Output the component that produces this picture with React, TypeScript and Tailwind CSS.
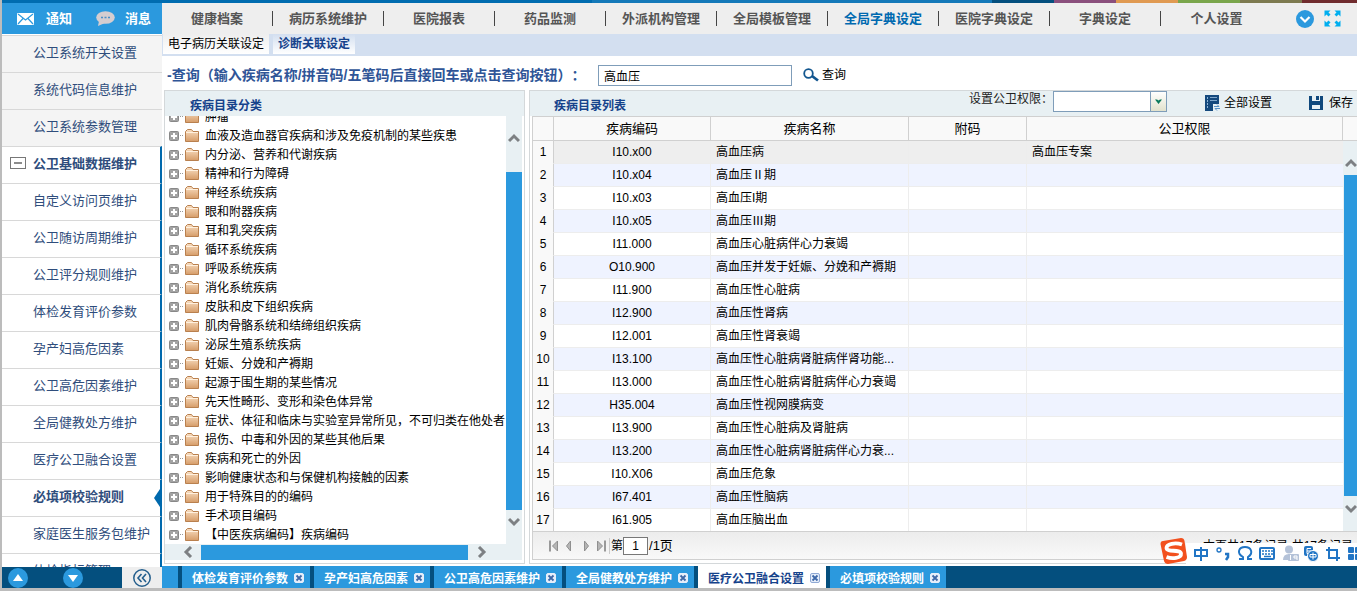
import clsx from "clsx";
import type { ReactNode } from "react";

const topNav = [
  "健康档案",
  "病历系统维护",
  "医院报表",
  "药品监测",
  "外派机构管理",
  "全局模板管理",
  "全局字典设定",
  "医院字典设定",
  "字典设定",
  "个人设置",
];

const sideGroups = ["公卫系统开关设置", "系统代码信息维护", "公卫系统参数管理"];

const sideItems = [
  "自定义访问页维护",
  "公卫随访周期维护",
  "公卫评分规则维护",
  "体检发育评价参数",
  "孕产妇高危因素",
  "公卫高危因素维护",
  "全局健教处方维护",
  "医疗公卫融合设置",
  "必填项校验规则",
  "家庭医生服务包维护",
  "体检指标管理",
];

const categories = [
  "肿瘤",
  "血液及造血器官疾病和涉及免疫机制的某些疾患",
  "内分泌、营养和代谢疾病",
  "精神和行为障碍",
  "神经系统疾病",
  "眼和附器疾病",
  "耳和乳突疾病",
  "循环系统疾病",
  "呼吸系统疾病",
  "消化系统疾病",
  "皮肤和皮下组织疾病",
  "肌肉骨骼系统和结缔组织疾病",
  "泌尿生殖系统疾病",
  "妊娠、分娩和产褥期",
  "起源于围生期的某些情况",
  "先天性畸形、变形和染色体异常",
  "症状、体征和临床与实验室异常所见，不可归类在他处者",
  "损伤、中毒和外因的某些其他后果",
  "疾病和死亡的外因",
  "影响健康状态和与保健机构接触的因素",
  "用于特殊目的的编码",
  "手术项目编码",
  "【中医疾病编码】疾病编码",
];

const diseases = [
  { code: "I10.x00", name: "高血压病", right: "高血压专案" },
  { code: "I10.x04", name: "高血压Ⅱ期" },
  { code: "I10.x03", name: "高血压I期" },
  { code: "I10.x05", name: "高血压Ⅲ期" },
  { code: "I11.000", name: "高血压心脏病伴心力衰竭" },
  { code: "O10.900", name: "高血压并发于妊娠、分娩和产褥期" },
  { code: "I11.900", name: "高血压性心脏病" },
  { code: "I12.900", name: "高血压性肾病" },
  { code: "I12.001", name: "高血压性肾衰竭" },
  { code: "I13.100", name: "高血压性心脏病肾脏病伴肾功能..." },
  { code: "I13.000", name: "高血压性心脏病肾脏病伴心力衰竭" },
  { code: "H35.004", name: "高血压性视网膜病变" },
  { code: "I13.900", name: "高血压性心脏病及肾脏病" },
  { code: "I13.200", name: "高血压性心脏病肾脏病伴心力衰..." },
  { code: "I10.X06", name: "高血压危象" },
  { code: "I67.401", name: "高血压性脑病" },
  { code: "I61.905", name: "高血压脑出血" },
];

const openTabs = [
  "体检发育评价参数",
  "孕产妇高危因素",
  "公卫高危因素维护",
  "全局健教处方维护",
  "医疗公卫融合设置",
  "必填项校验规则",
];

function Chevron({ d }: { d: string }) {
  return (
    <svg width="12" height="12" viewBox="0 0 12 12" className="shrink-0">
      <path d={d} fill="none" stroke="#7d8083" strokeWidth="3" />
    </svg>
  );
}

const UP = "M1 9 L6 4 L11 9";
const DOWN = "M1 3 L6 8 L11 3";
const LEFT = "M9 1 L4 6 L9 11";
const RIGHT = "M3 1 L8 6 L3 11";

function ColorStrip() {
  return (
    <div className="flex h-[3px] shrink-0 bg-[#006cb0]">
      <div className="ml-auto w-[400px] bg-[#1479b9]" />
      <div className="w-[62px] bg-[#044f7e]" />
      <div className="w-[62px] bg-[#8a4f7d]" />
      <div className="w-[62px] bg-[#e09a52]" />
      <div className="w-[62px] bg-[#7aa64c]" />
      <div className="w-[62px] bg-[#7d7a50]" />
      <div className="w-[55px] bg-[#702c2e]" />
    </div>
  );
}

function SideItem({ label, className, children }: { label: string; className?: string; children?: ReactNode }) {
  return (
    <li className={clsx("relative h-[37px] shrink-0 border-t border-[#d8d8d8]", className)}>
      {children}
      <a href="#" className="flex h-full items-center pb-[2px] pl-[31px] text-[13px] leading-4 whitespace-nowrap">
        {label}
      </a>
    </li>
  );
}

function Sidebar() {
  return (
    <aside className="flex w-40 shrink-0 flex-col">
      <div className="flex h-[31px] shrink-0 items-center bg-[#2b99de] text-[13px] font-bold text-white">
        <button className="flex items-center gap-3 pl-[15px]">
          <svg width="17" height="12" viewBox="0 0 17 12">
            <rect width="17" height="12" rx="1" fill="#fff" />
            <path d="M1 1 L8.500 7 L16 1 M1 11 L6 5.500 M16 11 L11 5.500" fill="none" stroke="#2b99de" strokeWidth="1.200" />
          </svg>
          通知
        </button>
        <button className="ml-6 flex items-center gap-[10px]">
          <svg width="19" height="15" viewBox="0 0 19 15">
            <ellipse cx="9.500" cy="6.500" rx="9.300" ry="6.300" fill="#d5cdd0" />
            <path d="M3 10 L2 15 L9 12 Z" fill="#d5cdd0" />
            <path d="M5 6.500 h2 M8.500 6.500 h2 M12 6.500 h2" stroke="#4a90c8" strokeWidth="1.300" />
          </svg>
          消息
        </button>
      </div>
      <nav className="min-h-0 flex-1 overflow-hidden bg-white pt-px text-[#2f4d7c]">
        <ul>
          {sideGroups.map((label) => (
            <SideItem key={label} label={label} className="bg-[#f4f4f4]" />
          ))}
          <SideItem label="公卫基础数据维护" className="border-r-2 border-r-[#0069ad] font-bold">
            <svg width="16" height="12" viewBox="0 0 16 12" className="absolute top-[10px] left-2">
              <rect x="0.500" y="0.500" width="15" height="11" fill="#fff" stroke="#777" />
              <path d="M4 6 h8" stroke="#666" strokeWidth="1.500" />
            </svg>
          </SideItem>
          {sideItems.map((label) => (
            <SideItem
              key={label}
              label={label}
              className={clsx("border-r-2 border-r-[#0069ad]", label === "必填项校验规则" && "font-bold")}
            >
              {label === "必填项校验规则" && (
                <svg width="6" height="18" viewBox="0 0 6 18" className="absolute top-[9px] right-0">
                  <path d="M6 0 L0 9 L6 18 Z" fill="#0069ad" />
                </svg>
              )}
            </SideItem>
          ))}
        </ul>
      </nav>
      <div className="flex h-[21px] shrink-0 bg-[#044f7e]">
        <div className="flex flex-1 items-center gap-[35px] pl-[6px]">
          <button aria-label="上移">
            <svg width="20" height="20" viewBox="0 0 20 20">
              <circle cx="10" cy="10" r="10" fill="#2b99de" />
              <path d="M10 6 L15 13 H5 Z" fill="#fff" />
            </svg>
          </button>
          <button aria-label="下移">
            <svg width="20" height="20" viewBox="0 0 20 20">
              <circle cx="10" cy="10" r="10" fill="#2b99de" />
              <path d="M10 14 L15 7 H5 Z" fill="#fff" />
            </svg>
          </button>
        </div>
        <button aria-label="收起" className="flex w-10 items-center justify-center bg-[#eee]">
          <svg width="18" height="18" viewBox="0 0 18 18" fill="none" stroke="#255f8d">
            <circle cx="9" cy="9" r="8.200" strokeWidth="1.500" />
            <path d="M8.500 5 L5 9 L8.500 13 M13 5 L9.500 9 L13 13" strokeWidth="1.600" />
          </svg>
        </button>
      </div>
    </aside>
  );
}

function TopNav() {
  return (
    <nav className="flex h-[31px] shrink-0 items-center bg-[#eee]">
      {topNav.map((label, i) => (
        <a
          key={label}
          href="#"
          className={clsx(
            "h-[15px] w-[111px] shrink-0 text-center text-[13px] leading-[15px] font-bold whitespace-nowrap",
            i < topNav.length - 1 && "border-r border-[#444]",
            label === "全局字典设定" ? "text-[#0069b0]" : "text-[#555]",
          )}
        >
          {label}
        </a>
      ))}
      <div className="ml-auto flex items-center gap-[10px] pr-4">
        <button aria-label="展开">
          <svg width="18" height="18" viewBox="0 0 18 18">
            <circle cx="9" cy="9" r="9" fill="#2b99de" />
            <path d="M4.500 7 L9 11.500 L13.500 7" fill="none" stroke="#fff" strokeWidth="2.200" />
          </svg>
        </button>
        <button aria-label="全屏">
          <svg width="17" height="17" viewBox="0 0 17 17" fill="#00aeef">
            <path d="M0.500 0.500 h6 l-2 2 l2 2 l-2 2 l-2 -2 l-2 2 z" />
            <path d="M16.500 0.500 v6 l-2 -2 l-2 2 l-2 -2 l2 -2 l-2 -2 z" />
            <path d="M0.500 16.500 v-6 l2 2 l2 -2 l2 2 l-2 2 l2 2 z" />
            <path d="M16.500 16.500 h-6 l2 -2 l-2 -2 l2 -2 l2 2 l2 -2 z" />
          </svg>
        </button>
      </div>
    </nav>
  );
}

function FolderIcon() {
  return (
    <svg width="14" height="13" viewBox="0 0 14 13" className="shrink-0">
      <defs>
        <linearGradient id="folder" x1="0" y1="0" x2="0" y2="1">
          <stop offset="0" stopColor="#f9dfc3" />
          <stop offset="1" stopColor="#d69c68" />
        </linearGradient>
      </defs>
      <path d="M0.500 12.500 V2.500 L2.500 0.500 H6.500 L8 2.500 H13.500 V12.500 Z" fill="url(#folder)" stroke="#b9804e" />
      <path d="M1 3.500 H13" stroke="#fff1df" />
    </svg>
  );
}

function CategoryPanel() {
  return (
    <section className="flex w-[361px] shrink-0 flex-col border border-[#d4d8da] bg-white">
      <h2 className="h-[25px] shrink-0 bg-[#e8f0f3] pt-[7px] pl-[25px] text-xs leading-4 font-bold text-[#15428b]">
        疾病目录分类
      </h2>
      <div className="flex min-h-0 flex-1 pr-[2px]">
        <ul className="flex min-w-0 flex-1 flex-col justify-end overflow-hidden pl-1 text-xs">
          {categories.map((name) => (
            <li key={name} className="flex h-[19px] shrink-0 items-center whitespace-nowrap">
              <button aria-label="展开" className="shrink-0">
                <svg width="10" height="10" viewBox="0 0 10 10">
                  <rect x="0.500" y="0.500" width="9" height="9" rx="1" fill="#a3a3a3" stroke="#888" />
                  <path d="M5 2 V8 M2 5 H8" stroke="#fff" strokeWidth="2" />
                </svg>
              </button>
              <span className="mr-[2px] ml-px w-[3px] shrink-0 border-t border-dotted border-[#999]" />
              <FolderIcon />
              <span className="pl-[6px]">{name}</span>
            </li>
          ))}
        </ul>
        <div className="flex w-4 shrink-0 flex-col items-center bg-[#e8f0f3] pt-4 pb-4">
          <Chevron d={UP} />
          <div className="mt-[28px] mb-[6px] w-full flex-1 bg-[#2b99de]" />
          <Chevron d={DOWN} />
        </div>
      </div>
      <div className="mr-[2px] mb-[3px] flex h-4 shrink-0 items-center bg-[#e8f0f3] pr-[34px] pl-[17px]">
        <Chevron d={LEFT} />
        <div className="mr-2 ml-[7px] h-[15px] flex-1 bg-[#2b99de]" />
        <Chevron d={RIGHT} />
      </div>
    </section>
  );
}

function ListToolbar() {
  return (
    <div className="flex h-[25px] shrink-0 items-start bg-[#e8f0f3] text-xs leading-4">
      <h2 className="mt-[7px] ml-6 font-bold text-[#15428b]">疾病目录列表</h2>
      <label htmlFor="permission" className="ml-auto text-[#222]">
        设置公卫权限：
      </label>
      <div className="relative h-[21px] w-[114px]">
        <select id="permission" className="h-full w-full appearance-none border border-[#7f9db9] bg-white" />
        <span className="pointer-events-none absolute inset-y-px right-px flex w-4 items-center justify-center border-l border-[#7f9db9] bg-linear-to-b from-white to-[#e2e2cc]">
          <svg width="7" height="5" viewBox="0 0 7 5">
            <path d="M0 0.500 H2 L3.500 1.500 L5 0.500 H7 L3.500 5 Z" fill="#0b7a5c" />
          </svg>
        </span>
      </div>
      <button className="mt-1 ml-[38px] flex items-center gap-1">
        <svg width="15" height="16" viewBox="0 0 15 16">
          <path d="M0 0 H14 V9 H8 V16 H0 Z" fill="#15497d" />
          <path d="M5 2.500 H12 M5 5.500 H12" stroke="#7fa6ca" />
          <path d="M2.500 2 V14" stroke="#8db4d6" strokeDasharray="2 1" />
          <path d="M9 11.500 H14 L12 9.500 M15 13.500 H10 L12 15.500" fill="none" stroke="#5a93c7" />
        </svg>
        全部设置
      </button>
      <button className="mt-1 mr-1 ml-[37px] flex items-center gap-[6px]">
        <svg width="14" height="14" viewBox="0 0 14 14">
          <path d="M0 0 H14 V14 H0 Z" fill="#0f487c" />
          <path d="M3 0 H11 V5 H3 Z M3 9 H11 V13 H3 Z" fill="#e8f0f3" />
          <path d="M7 0 H10 V4 H7 Z" fill="#0f487c" />
        </svg>
        保存
      </button>
    </div>
  );
}

function DiseaseTable() {
  return (
    <div className="ml-[2px] flex min-h-0 flex-1 overflow-hidden border-l border-[#d0d0d0]">
      <div className="min-w-0 flex-1 overflow-hidden">
        <table className="w-full table-fixed border-separate border-spacing-0 text-xs">
          <colgroup>
            <col className="w-[21px]" />
            <col className="w-[157px]" />
            <col className="w-[198px]" />
            <col className="w-[118px]" />
            <col />
          </colgroup>
          <thead>
            <tr className="h-[25px] bg-[#f9f9f9] text-[13px] leading-4">
              {["", "疾病编码", "疾病名称", "附码", "公卫权限"].map((title, i) => (
                <th key={i} className="border-y border-r border-[#d0d0d0] p-0 font-normal">
                  {title}
                </th>
              ))}
            </tr>
          </thead>
          <tbody>
            {diseases.map((row, i) => (
              <tr
                key={row.code}
                className={clsx("h-[23px]", i === 0 ? "bg-[#eee]" : i % 2 ? "bg-[#eff3ff]" : "bg-white")}
              >
                <td className="border-r border-b border-r-[#d0d0d0] border-b-[#f9f9f9] bg-[#f9f9f9] p-0 text-center">
                  {i + 1}
                </td>
                <td className="border-r border-b border-[#ededed] p-0 text-center">{row.code}</td>
                <td className="truncate border-r border-b border-[#ededed] p-0 pl-[5px]">{row.name}</td>
                <td className="border-r border-b border-[#ededed] p-0" />
                <td className="border-b border-[#ededed] p-0 pl-[5px]">{row.right}</td>
              </tr>
            ))}
          </tbody>
        </table>
      </div>
      <div className="flex w-[14px] shrink-0 flex-col">
        <div className="h-[25px] shrink-0 border-y border-[#d0d0d0] bg-[#f9f9f9]" />
        <div className="flex min-h-0 flex-1 flex-col items-center bg-[#e8f0f3] pt-4 pb-4 pl-px">
          <Chevron d={UP} />
          <div className="mt-[6px] mb-[7px] w-full flex-1 bg-[#2b99de]" />
          <Chevron d={DOWN} />
        </div>
      </div>
    </div>
  );
}

function PagerIcon({ d, label, bar }: { d: string; label: string; bar?: string }) {
  return (
    <button aria-label={label}>
      <svg width="11" height="12" viewBox="0 0 11 12">
        <path d={d} fill="#b5b5b5" stroke="#8f8f8f" />
        {bar && <path d={bar} stroke="#999" strokeWidth="2" />}
      </svg>
    </button>
  );
}

function Pager() {
  return (
    <div className="mb-[3px] ml-[2px] flex h-[29px] shrink-0 items-center border border-r-0 border-[#d0d0d0] bg-linear-to-b from-[#ececec] to-[#f9f9f9] pl-[15px] text-xs leading-4">
      <div className="flex gap-[5px]">
        <PagerIcon label="首页" d="M9.500 1 V11 L4.500 6 Z" bar="M2 0.500 V11.500" />
        <PagerIcon label="上一页" d="M6.500 1 V11 L2.500 6 Z" />
        <PagerIcon label="下一页" d="M4.500 1 V11 L8.500 6 Z" />
        <PagerIcon label="末页" d="M1.500 1 V11 L6.500 6 Z" bar="M9 0.500 V11.500" />
      </div>
      <label htmlFor="page" className="ml-[2px] border-l border-[#ccc] pl-px">
        第
      </label>
      <input
        id="page"
        defaultValue="1"
        className="h-[18px] w-[25px] border border-[#777] bg-white text-center"
      />
      <span className="pl-px text-[13px]">/1页</span>
      <span className="ml-auto pr-1">本页共17条记录,共17条记录</span>
    </div>
  );
}

function ImeBar() {
  return (
    <div className="absolute right-0 bottom-[23px] flex h-[26px] items-end">
      <svg width="28" height="28" viewBox="0 0 28 28" className="relative z-10 -mr-[2px] shrink-0">
        <path d="M3 4 L21 1 Q24 1 24.500 4 L27 20 Q27 23 24 24 L8 27 Q5 27 4 24 L0.500 7 Q0.500 4 3 4 Z" fill="#f2501e" />
        <path
          d="M22 7.500 C15 5 6.500 7 6.500 11 C6.500 15.500 20.500 12 21 16.500 C21.500 21.500 12 22 6.500 20"
          fill="none"
          stroke="#fff"
          strokeWidth="3.800"
        />
      </svg>
      <div className="flex h-[22px] w-[171px] items-start overflow-hidden bg-white text-[#2175c5]">
        <svg width="171" height="22" viewBox="0 0 171 22" fill="none" stroke="#2175c5" strokeWidth="2">
          <path d="M9 7 H21 V13 H9 Z M15 4 V18" />
          <circle cx="33" cy="7" r="2" strokeWidth="1.300" />
          <path d="M39 11 h3 v3 l-2 3" strokeWidth="2.500" />
          <path d="M53 16 H57 V14 C50 10 53 4 59 4 C65 4 68 10 62 14 V16 H66" />
          <rect x="74" y="5" width="14" height="11" rx="1" />
          <path d="M76 8 H87 M76 11 H87" strokeDasharray="2 1" strokeWidth="1.500" />
          <path d="M78 13.500 H85" strokeWidth="1.500" />
          <g fill="#b4c2d8" stroke="none">
            <circle cx="103" cy="6.500" r="4" />
            <path d="M97 17 Q97 11 103 11 Q107 11 109 13 V17 H97 Z" />
            <rect x="102" y="11" width="11" height="7" rx="1" />
          </g>
          <path d="M104.500 12 V17 M111 17 V13 H108 V15 H111" stroke="#fff" strokeWidth="1" />
          <rect x="118" y="3" width="9" height="10" rx="2" fill="#2175c5" stroke="none" />
          <path d="M125 5.500 H121 V10.500 H125 M121 8 H125" stroke="#fff" strokeWidth="1" />
          <circle cx="127" cy="13" r="5.500" fill="#2175c5" stroke="#fff" strokeWidth="1" />
          <path d="M124 11.500 H130 V14 H124 Z M127 9.500 V16.500" stroke="#fff" strokeWidth="1" />
          <path d="M143 4 V15 H154 M140 7 H151 V18" />
          <g fill="#2175c5" stroke="none">
            <rect x="162" y="4" width="6" height="6" rx="1" />
            <rect x="169" y="4" width="6" height="6" rx="1" />
            <rect x="162" y="11" width="6" height="6" rx="1" />
            <rect x="169" y="11" width="6" height="6" rx="1" />
          </g>
        </svg>
      </div>
    </div>
  );
}

function BottomTabs() {
  return (
    <div className="flex h-[22px] shrink-0 gap-1 bg-[#044f7e] text-xs font-bold">
      <div className="w-4 bg-[#2b99de]" />
      {openTabs.map((label) => {
        const active = label === "医疗公卫融合设置";
        return (
          <div
            key={label}
            className={clsx(
              "flex shrink-0 items-start gap-[6px] pr-[6px] pl-[10px]",
              active ? "bg-white text-[#15428b]" : "bg-[#2b99de] text-white",
            )}
          >
            <button className="mt-[5px] leading-4 whitespace-nowrap">{label}</button>
            <button aria-label={"关闭" + label} className="mt-[7px]">
              <svg width="10" height="10" viewBox="0 0 10 10" className="block">
                <rect x="0.500" y="0.500" width="9" height="9" rx="1.500" fill="#e6eefa" stroke={active ? "#8fa9d4" : "#e6eefa"} />
                <path d="M2.500 2.500 L7.500 7.500 M7.500 2.500 L2.500 7.500" stroke="#3e68a8" strokeWidth="1.800" />
              </svg>
            </button>
          </div>
        );
      })}
    </div>
  );
}

export default function App() {
  return (
    <div className="relative flex h-screen flex-col overflow-hidden border-b-3 border-l-2 border-[#bcbcbc] bg-white font-['Liberation_Sans','Noto_Sans_CJK_SC',sans-serif] text-black [text-spacing-trim:space-all]">
      <ColorStrip />
      <div className="flex min-h-0 flex-1">
        <Sidebar />
        <main className="flex min-w-0 flex-1 flex-col">
          <TopNav />
          <div className="flex h-[22px] shrink-0 gap-1 bg-[#d3dff0] pl-px text-xs leading-4">
            <button className="h-5 bg-linear-to-b from-[#eee] to-white px-[5px]">电子病历关联设定</button>
            <button className="h-5 bg-linear-to-b from-[#d3dff0] to-white px-[5px] font-bold text-[#15428b]">
              诊断关联设定
            </button>
          </div>
          <form className="flex h-[34px] shrink-0 items-center pt-1 pl-[5px]">
            <label htmlFor="keyword" className="w-[431px] text-sm leading-5 font-bold whitespace-nowrap text-[#2f5597]">
              -查询（输入疾病名称/拼音码/五笔码后直接回车或点击查询按钮）：
            </label>
            <input
              id="keyword"
              defaultValue="高血压"
              className="h-[21px] w-[194px] border border-[#7f9db9] bg-white px-[5px] text-xs"
            />
            <button type="button" className="ml-[11px] flex items-center gap-[3px] text-xs">
              <svg width="16" height="14" viewBox="0 0 16 14" fill="none" stroke="#12568f">
                <circle cx="5.500" cy="5.500" r="4.300" strokeWidth="1.800" />
                <path d="M9 8 L15 12.500" strokeWidth="2.800" />
              </svg>
              查询
            </button>
          </form>
          <div className="mb-[2px] flex min-h-0 flex-1 gap-1 pl-[2px]">
            <CategoryPanel />
            <section className="flex min-w-0 flex-1 flex-col border border-r-0 border-[#d4d8da] bg-white">
              <ListToolbar />
              <DiseaseTable />
              <Pager />
            </section>
          </div>
          <BottomTabs />
        </main>
      </div>
      <ImeBar />
    </div>
  );
}
